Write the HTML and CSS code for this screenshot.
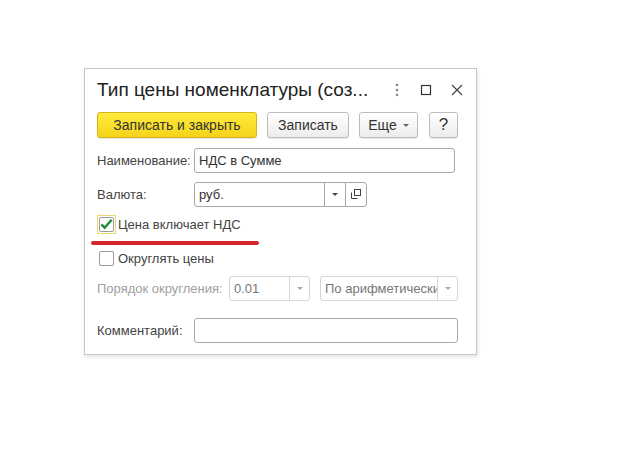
FILE: index.html
```html
<!DOCTYPE html>
<html lang="ru">
<head>
<meta charset="utf-8">
<link rel="stylesheet" href="styles.css">
</head>
<body>
<div class="dialog">
  <div class="titlebar">
    <div class="title">Тип цены номенклатуры (соз...</div>
    <div class="tools">
      <svg class="kebab" width="4" height="14" viewBox="0 0 4 14"><circle cx="2" cy="2" r="1.3"/><circle cx="2" cy="7" r="1.3"/><circle cx="2" cy="12" r="1.3"/></svg>
      <svg class="maxi" width="12" height="12" viewBox="0 0 12 12"><rect x="1.5" y="1.5" width="9" height="9" fill="none" stroke="#333" stroke-width="1.2"/></svg>
      <svg class="close" width="12" height="12" viewBox="0 0 12 12"><path d="M1 1L11 11M11 1L1 11" stroke="#444" stroke-width="1.2"/></svg>
    </div>
  </div>
  <div class="toolbar">
    <button class="btn primary">Записать и закрыть</button>
    <button class="btn save">Записать</button>
    <button class="btn more">Еще <span class="caret"></span></button>
    <button class="btn help">?</button>
  </div>
  <div class="form">
    <div class="row r-name">
      <span class="label">Наименование:</span>
      <div class="input wide">НДС в Сумме</div>
    </div>
    <div class="row r-cur">
      <span class="label">Валюта:</span>
      <div class="input combo">
        <span class="val">руб.</span>
        <span class="seg drop"><span class="caret dark"></span></span>
        <span class="seg open">
          <svg width="11" height="11" viewBox="0 0 11 11"><rect x="3.5" y="0.5" width="6" height="6" fill="none" stroke="#444"/><path d="M0.5 3.5V9.5H6.5" fill="none" stroke="#444"/></svg>
        </span>
      </div>
    </div>
    <div class="row r-vat">
      <span class="cb focused"><span class="box checked">
        <svg width="14" height="12" viewBox="0 0 14 12"><path d="M1.5 6.5L5 10L12.5 1.5" fill="none" stroke="#1f8a3c" stroke-width="2.6"/></svg>
      </span></span>
      <span class="cbtext">Цена включает НДС</span>
    </div>
    <div class="underline"></div>
    <div class="row r-round">
      <span class="cb"><span class="box"></span></span>
      <span class="cbtext">Округлять цены</span>
    </div>
    <div class="row r-order">
      <span class="label muted">Порядок округления:</span>
      <div class="input combo disabled small">
        <span class="val">0.01</span>
        <span class="seg drop"><span class="caret"></span></span>
      </div>
      <div class="input combo disabled method">
        <span class="val">По арифметически</span>
        <span class="seg drop"><span class="caret"></span></span>
      </div>
    </div>
    <div class="row r-comment">
      <span class="label">Комментарий:</span>
      <div class="input comment"></div>
    </div>
  </div>
</div>
</body>
</html>
```
FILE: styles.css
```css
* { box-sizing: border-box; }
html, body { margin: 0; padding: 0; background: #fff; }
body {
  width: 630px; height: 456px;
  font-family: "Liberation Sans", Arial, sans-serif;
  color: #333;
  padding: 68px 0 0 84px;
}
.dialog {
  width: 393px; height: 287px;
  border: 1px solid #c8c8c8;
  box-shadow: 1px 2px 4px rgba(0,0,0,0.12);
  background: #fff;
  padding: 0 0 0 12px;
}
.titlebar {
  display: flex; align-items: center;
  height: 40px;
  padding-top: 2px;
}
.title {
  font-size: 19px; color: #222;
  flex: 1;
  white-space: nowrap;
}
.tools { display: flex; align-items: center; }
.kebab { fill: #888; margin-right: 21px; }
.maxi { margin-right: 19px; }
.close { margin-right: 13px; }
.toolbar {
  display: flex; align-items: center;
  margin-top: 3px;
  height: 26px;
}
.btn {
  font-family: inherit; font-size: 14px; color: #333;
  height: 26px;
  border: 1px solid #bdbdbd; border-radius: 3px;
  background: linear-gradient(#ffffff, #ececec);
  box-shadow: 0 1px 1px rgba(0,0,0,0.1);
  padding: 0;
  margin-right: 10px;
  display: flex; align-items: center; justify-content: center;
}
.btn.primary {
  width: 160px;
  background: linear-gradient(#ffec3d, #f6d31a);
  border-color: #d4b31b;
  color: #333;
}
.btn.save { width: 82px; }
.btn.more { width: 59px; gap: 6px; margin-right: 11px; }
.btn.help { width: 29px; font-size: 17px; }
.caret {
  display: inline-block; width: 0; height: 0;
  border-left: 3px solid transparent; border-right: 3px solid transparent;
  border-top: 3px solid #666;
}
.caret.dark { border-top-color: #444; }
.form { display: flex; flex-direction: column; }
.row { display: flex; align-items: center; }
.label { font-size: 13px; color: #444; width: 97px; flex: none; }
.label.muted { color: #a0a0a0; width: 132px; }
.input {
  height: 25px;
  border: 1px solid #a8a8a8; border-radius: 3px;
  font-size: 13px; color: #333;
  display: flex; align-items: center;
  padding-left: 4px;
  background: #fff;
}
.r-name { margin-top: 10px; }
.input.wide { width: 261px; }
.r-cur { margin-top: 9px; }
.combo { padding-left: 0; }
.combo .val { flex: 1; padding-left: 4px; white-space: nowrap; overflow: hidden; }
.combo .seg {
  height: 100%;
  display: flex; align-items: center; justify-content: center;
  border-left: 1px solid #a8a8a8;
}
.r-cur .combo { width: 173px; }
.r-cur .seg.drop { width: 21px; }
.r-cur .seg.open { width: 21px; }
.r-vat { margin-top: 7px; height: 20px; }
.cb {
  width: 19px; height: 19px;
  display: flex; align-items: center; justify-content: center;
  border: 1px solid transparent;
}
.cb.focused { border-color: #ecd66a; }
.box {
  width: 15px; height: 15px;
  border: 1px solid #9a9a9a; border-radius: 2px;
  background: #fff;
  display: flex; align-items: center; justify-content: center;
}
.cbtext { font-size: 13px; color: #444; margin-left: 2px; }
.underline {
  width: 168px; height: 4px;
  background: #d6252c; border-radius: 2px;
  margin: 7px 0 0 -6px;
}
.r-round { margin-top: 3px; height: 20px; }
.r-order { margin-top: 8px; }
.disabled { border-color: #d6d6d6; color: #777; }
.disabled .seg { border-left-color: #d6d6d6; }
.small { width: 81px; }
.small .seg.drop { width: 20px; }
.method { width: 138px; margin-left: 10px; }
.method .seg.drop { width: 20px; }
.disabled .caret { border-top-color: #aaa; }
.r-comment { margin-top: 17px; }
.input.comment { width: 264px; }
```
